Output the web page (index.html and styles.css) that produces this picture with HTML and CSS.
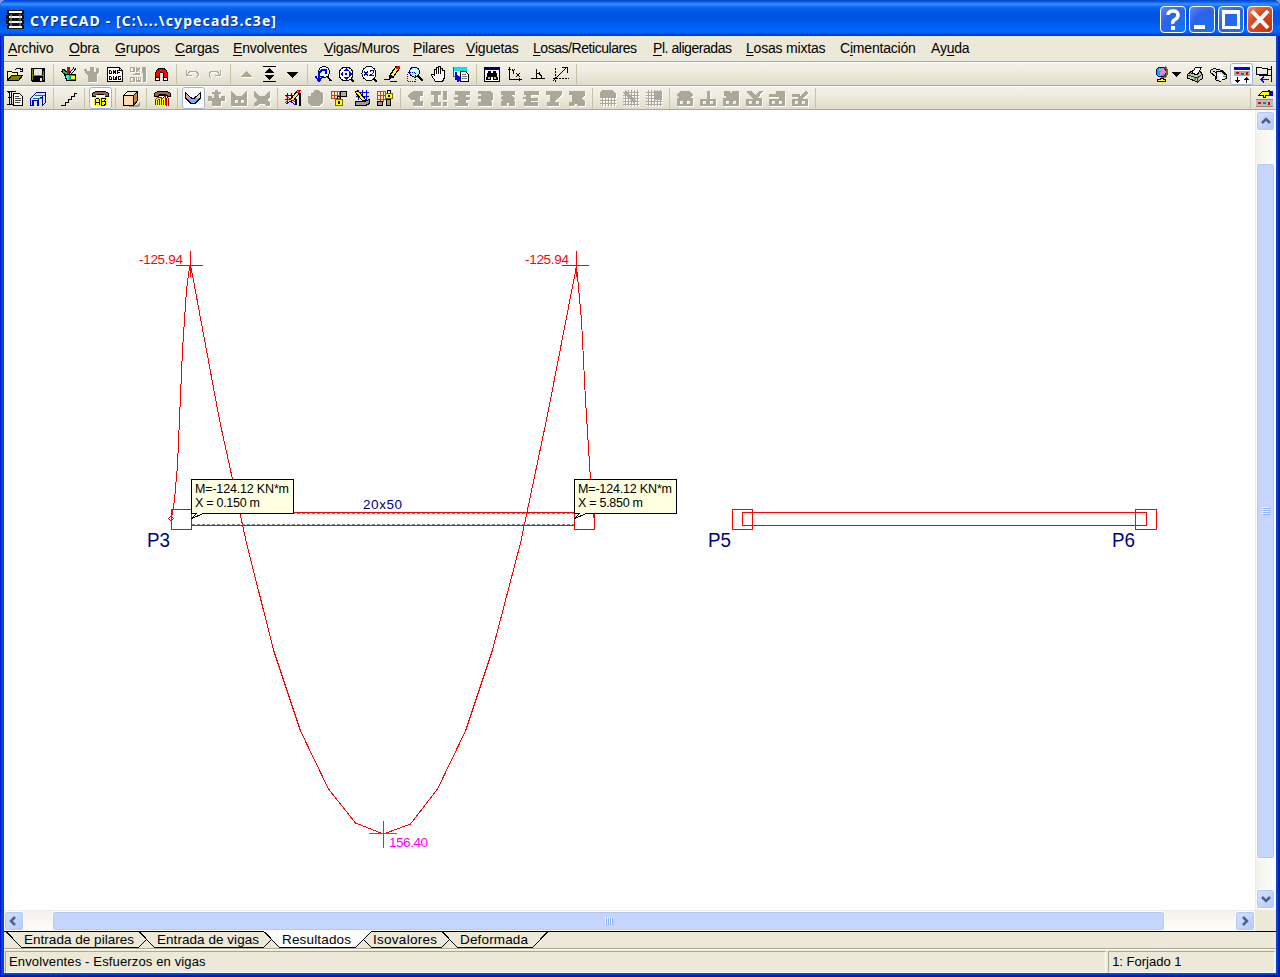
FILE: index.html
```html
<!DOCTYPE html>
<html lang="es">
<head>
<meta charset="utf-8">
<title>CYPECAD</title>
<link rel="stylesheet" href="styles.css">
</head>
<body>
<div class="window">
<header class="titlebar">
  <svg class="logo" viewBox="0 0 19 20"><path d="M1 0h17v4h-1v1h1v4h-1v1h1v4h-1v1h1v4H1v-4h1v-1H0v-4h2V9H0V5h2V4H1z" fill="#111"/><path d="M3 2h13M3 7h13M3 12h13M3 17h13" stroke="#fff" stroke-width="2"/><path d="M5 4v12M14 4v12" stroke="#999"/></svg>
  <h1>CYPECAD - [C:\...\cypecad3.c3e]</h1>
  <div class="controls">
    <button class="ctl"><svg viewBox="0 0 26 27"><path d="M8 9Q8 5 13 5t5 4q0 3-3 4.500t-2 4.500" fill="none" stroke="#fff" stroke-width="3.500"/><path d="M11 20h4v4h-4z" fill="#fff"/></svg></button>
    <button class="ctl"><svg viewBox="0 0 26 27"><path d="M5 19h11v4H5z" fill="#fff"/></svg></button>
    <button class="ctl"><svg viewBox="0 0 26 27"><path d="M4 4h18v19H4zM7 8v12h12V8z" fill="#fff" fill-rule="evenodd"/></svg></button>
    <button class="ctl close"><svg viewBox="0 0 26 27"><path d="M5 5L21 22M21 5L5 22" stroke="#fff" stroke-width="4"/></svg></button>
  </div>
</header>
<div class="client">
<nav class="menu">
  <span><u>A</u>rchivo</span><span><u>O</u>bra</span><span><u>G</u>rupos</span><span><u>C</u>argas</span><span><u>E</u>nvolventes</span><span><u>V</u>igas/Muros</span><span><u>P</u>ilares</span><span><u>V</u>iguetas</span><span class="tight"><u>L</u>osas/Reticulares</span><span class="tight"><u>P</u>l. aligeradas</span><span><u>L</u>osas mixtas</span><span>C<u>i</u>mentación</span><span>Ay<u>u</u>da</span>
</nav>
<div class="toolbar">
  <b><svg viewBox="0 0 17 17"><path d="M.5 14.500v-9h4l1 1h5v3" fill="#ffff80" stroke="#000"/><path d="M.5 14.500l4-5h11l-4 5z" fill="#808000" stroke="#000"/><path d="M8.500 3.500l2-1.500h2l2 2M15.500 2v3h-3" fill="none" stroke="#000"/></svg></b>
  <b><svg viewBox="0 0 17 17"><path d="M1 2h14v14H2v-1H1z" fill="#000"/><path d="M2 3h1v11H2zM13 5h1v9h-1zM3 9h10v1H3z" fill="#808000"/><path d="M4 3h8v6H4zM10 12h2v3h-2z" fill="#e8e6dc"/></svg></b>
  <s></s>
  <b><svg viewBox="0 0 17 17"><path d="M1 4l5 4" stroke="#000" stroke-width="4"/><path d="M2 5l4 3" stroke="#00d050" stroke-width="2"/><path d="M7.500 1v7" stroke="#d00000" stroke-width="3"/><path d="M14 2L9 8" stroke="#000" stroke-width="3"/><path d="M14 2L9 8" stroke="#fff"/><path d="M3 8h12v7H5z" fill="#000"/><path d="M5 9h3v5H6z" fill="#00ffff"/><path d="M8 9h6v5H8z" fill="#00b050"/><path d="M10 10h4v3h-4z" fill="#ff0"/></svg></b>
  <b class="off"><svg viewBox="0 0 17 17"><path d="M0 3h3v2h3V1h4v5h2V2h3v4l-2 2v8H4V9L1 7z"/></svg></b>
  <b><svg viewBox="0 0 17 17"><path d="M.5 1.500h12l3 3v11H.5z" fill="#fff" stroke="#000"/><path d="M12.500 1v3.500H16" fill="none" stroke="#000"/><path d="M2.500 4.500v3h2v-2l-1-1zM6.500 4v1l2 2v1M8.500 4v1l-2 2v1M13 4.500h-2.500V8M11 6.500h2M2.500 10.500v3h2v-2l-1-1zM6.500 10v3h3v-3M8 11v3M14 10.500h-2.500v3h2V12" fill="none" stroke="#000"/></svg></b>
  <b class="off"><svg viewBox="0 0 17 17"><path fill-rule="evenodd" d="M0 1h4l1 1v3L4 6H0zM1 2v3h2V2zM6 1h1l1 2 1-2h1v2L9 4l1 2H9L8 5 7 6H6zM12 1h4v15h-3V7h-1zM3 8l3-1h4v2H2zM0 11h4l1 1v3l-1 1H0zM1 12v3h2v-3zM6 11h1v3h1v-3h1v3h1v-3h1v5H6z"/></svg></b>
  <b><svg viewBox="0 0 17 17"><path d="M2.500 14.500v-8l2-3 2-1h4l2 1 2 3v8h-4v-7l-1-1h-2l-1 1v7z" fill="#f00" stroke="#000"/><path d="M2.500 11.500h4v3h-4zM10.500 11.500h4v3h-4z" fill="#fff" stroke="#000"/></svg></b>
  <s></s>
  <b class="off line"><svg viewBox="0 0 17 17"><path d="M2.500 4v5.500H8M3 9l3-3.500h6l2 2v2L12 12"/></svg></b>
  <b class="off line"><svg viewBox="0 0 17 17"><path d="M13.500 4v5.500H8M13 9l-3-3.500H4l-2 2v2L4 12"/></svg></b>
  <s></s>
  <b class="off"><svg viewBox="0 0 17 17"><path d="M8 5l6 6H2z"/></svg></b>
  <b><svg viewBox="0 0 17 17"><path d="M2 0h13v1H2zM2 15h13v1H2zM8.500 2l5 5h-10zM3.500 9h10l-5 5z"/></svg></b>
  <b><svg viewBox="0 0 17 17"><path d="M2 6h12l-6 6z"/></svg></b>
  <s></s>
  <b><svg viewBox="0 0 17 17"><circle cx="9" cy="6" r="5.500" fill="#d8ffff" stroke="#000"/><path d="M12 10l4 5" stroke="#000" stroke-width="2"/><path d="M4 14V7l3-3h4v4M0 10l4 5 4-5" fill="none" stroke="#0000e0" stroke-width="2"/></svg></b>
  <b><svg viewBox="0 0 17 17"><circle cx="8" cy="8" r="7" fill="#fff" stroke="#000"/><path d="M8 2l3 3H5zM8 14l3-3H5zM2 8l3-3v6zM14 8l-3-3v6zM7 7h2v2H7z" fill="#00f"/><path d="M13 13l3 3" stroke="#000" stroke-width="2"/></svg></b>
  <b><svg viewBox="0 0 17 17"><circle cx="8" cy="7.500" r="7" fill="#fff" stroke="#000"/><path d="M3 5.500l4 4M7 5.500l-4 4M9 6l1-1.500h2l1 1.500-4 3.500h4" fill="none" stroke="#0000c0"/><path d="M13 13l3 3" stroke="#000" stroke-width="2"/></svg></b>
  <b><svg viewBox="0 0 17 17"><path d="M14 1L7 11" stroke="#000" stroke-width="5"/><path d="M14 1L7 11" stroke="#ff0" stroke-width="2.500"/><path d="M15 0l-2 3" stroke="#f00" stroke-width="3"/><path d="M6 9l3 2-4 2zM0 13.500h6M6 15.500h7" stroke="#000"/></svg></b>
  <b><svg viewBox="0 0 17 17"><circle cx="7.500" cy="6" r="5" fill="#aff" stroke="#000"/><path d="M4 5h7" stroke="#fff" stroke-width="2"/><path d="M11 10l5 5" stroke="#000" stroke-width="2.500"/><path d="M.5 6.500h8v9h-8z" fill="none" stroke="#00f" stroke-dasharray="1 1"/></svg></b>
  <b><svg viewBox="0 0 17 17"><path d="M5.500 15.500l-4-6v-1h2l1 1v-6h2v-2h2v-1h2v2h2v2h2v7l-2 4z" fill="#fff" stroke="#000"/><path d="M6.500 3v5M8.500 2v6M10.500 3v5" stroke="#000"/></svg></b>
  <b><svg viewBox="0 0 17 17"><path d="M.5 1.500h13v9H.5z" fill="#fff" stroke="#008080"/><path d="M1 1h13v4H1z" fill="#00e8e8"/><path d="M7.500 5.500h5l3 3v7h-8z" fill="#fff" stroke="#000"/><path d="M9 8.500h4M9 10.500h5M9 12.500h5" stroke="#777"/><path d="M3 6v7h4M4 10l3 3-3 3" fill="none" stroke="#00f" stroke-width="2"/></svg></b>
  <s></s>
  <b><svg viewBox="0 0 17 17"><path d="M.5 1.500h15v14H.5z" fill="#fff" stroke="#000"/><path d="M1 1h15v3H1z" fill="#000080"/><path d="M4 5h3v2h2V5h3l2 8v1H9v-3H7v3H2v-1z"/><path d="M4 11h2v2H4zM10 11h2v2h-2z" fill="#bbb"/></svg></b>
  <b class="black"><svg viewBox="0 0 17 17"><path d="M2.500 1v12.500H15M1 3.500h3M12.500 12v3M5 3l1.500 2L8 3M6.500 5v3M9 7l4 4M13 7l-4 4"/></svg></b>
  <b class="black"><svg viewBox="0 0 17 17"><path d="M1 12.500h14M6.500 3v9M7 7.500h2l2 2V13M9.500 6v2"/></svg></b>
  <b class="black"><svg viewBox="0 0 17 17"><path d="M0 15L14 1M9 1.500h5v5"/><path d="M2.500 2v14M0 12.500h16" stroke-dasharray="2 1"/></svg></b>
  <s></s>
  <div class="right">
    <b class="globe"><svg viewBox="0 0 17 17"><path d="M11 1q5 5 0 10l-4 1" fill="none" stroke="#806000" stroke-width="2"/><circle cx="7" cy="6" r="5" fill="#00b8b0" stroke="#008"/><path d="M5 3l3 2-2 5M8 2l3 4-3 2" stroke="#f080e0" stroke-width="2" fill="none"/><path d="M6.500 12.500h3v1h2v2h-8v-2h3z" fill="#ff0" stroke="#000"/></svg></b>
    <b class="drop"><svg viewBox="0 0 9 17"><path d="M0 6h9l-4.500 5z"/></svg></b>
    <b><svg viewBox="0 0 17 17"><path d="M.5 8.500l5-4h7l3 4v4l-5 3.500-10-4z" fill="#c0c0b8" stroke="#000"/><path d="M4.500 7.500l4-6h6l-4 7z" fill="#fff" stroke="#000"/><path d="M1 9l9 3 5-3.500M10.500 12v4" fill="none" stroke="#333"/><path d="M7 12.500h2" stroke="#0c0" stroke-width="2"/></svg></b>
    <b><svg viewBox="0 0 17 17"><path d="M.5 4.500l3-2 9 2 3.500 4v4l-2 1.500-2-1-2 2.500-5-2V10l-4-3z" fill="#ddd" stroke="#000"/><path d="M3.500 5l3 2v6M6.500 6l5-1 4 4" fill="none" stroke="#000"/><path d="M8 8h4l2 3-4 4z" fill="#fff"/><path d="M13 10.500h3" stroke="#0b0"/></svg></b>
    <b class="on"><svg viewBox="0 0 17 17"><path d="M1 1h16v3H1z" fill="#00f"/><path d="M1 5h16v5H1z" fill="#aaa"/><path d="M3 7h3M14 6v3" stroke="#e00" stroke-width="2"/><path d="M8 8h3" stroke="#08a" stroke-width="2"/><path d="M4 11h1v3h2l-2.500 3L2 14h2zM13 17v-3h-2l2.500-3 2.500 3h-2v3z"/></svg></b>
    <b><svg viewBox="0 0 17 17"><path d="M.5 1.500h5l1 1h5v6H.5zM12 3.500h3.500v6H3M15.500 0v16" fill="none" stroke="#000"/><path d="M5 13.500h8M8 10.500l-3 3 3 3" fill="none" stroke="#00f"/></svg></b>
  </div>
</div>
<div class="toolbar">
  <b><svg viewBox="0 0 17 17"><path d="M2.500 1v14M4.500 1v14M0 1.500h9M0 14.500h6M1 1v2M1 7.500h4" stroke="#000"/><path d="M6.500 3.500h6l3 3v9h-9z" fill="#fff" stroke="#000"/><path d="M8 6.500h4M8 8.500h6M8 10.500h6M8 12.500h5" stroke="#444"/></svg></b>
  <b><svg viewBox="0 0 17 17"><path d="M.5 8.500l6-6h9v10l-3 3V6.500l-4 3v6H7v-5H3.500v5h-3z" fill="#d0f0ff" stroke="#0000a8"/><path d="M3 8.500h9M5 5.500h10" stroke="#0080a0"/><path d="M2.500 10v5" stroke="#0000a8"/></svg></b>
  <s></s>
  <b class="black"><svg viewBox="0 0 17 17"><path d="M0 15.500h4.500v-3h3v-3h3v-3h3v-3H16"/></svg></b>
  <s></s>
  <b class="on"><svg viewBox="0 0 17 17"><path d="M.5 3.500l3-2h10l3 2v3h-3l-2-2h-6l-2 2h-3z" fill="#a06040" stroke="#000"/><path d="M4 5h9v3H4z" fill="#fff"/><path d="M2 7h13v9H2z" fill="#ff0"/><path d="M3.500 15V9.500l1-1h2l1 1V15M3.500 12.500h4M9.500 8v7h3l1-1v-2l-1-.5h-3M12 11l1-1V8.500H9.500" fill="none" stroke="#000"/></svg></b>
  <s></s>
  <b><svg viewBox="0 0 17 17"><path d="M5 15h10l2-4v4l-2 2H6z" fill="#999"/><path d="M.5 5.500l4-4h10v9l-4 5H.5z" fill="#c88040" stroke="#000"/><path d="M.5 5.500h10v10H.5z" fill="#ffd8b0" stroke="#000"/><path d="M1 5l4-3h9l-4 3z" fill="#ffe8d0"/><path d="M10.500 5.500l4-4" stroke="#000"/></svg></b>
  <s></s>
  <b><svg viewBox="0 0 17 17"><path d="M.5 3.500l3-2h10l3 2v3h-3l-2-2h-6l-2 2h-3z" fill="#a06040" stroke="#000"/><path d="M4 5h9v3H4z" fill="#fff" stroke="#000"/><path d="M2.500 15v-5l2-2h2v7M8.500 15v-5l2-2v7M13.500 8v8" fill="none" stroke="#b00000" stroke-width="3"/><path d="M2.500 15v-5l2-2h2v7M8.500 15v-5l2-2v7M13.500 8v8" fill="none" stroke="#ff0"/></svg></b>
  <s></s>
  <b class="on"><svg viewBox="0 0 17 17"><path d="M1 3l6 5H1z" fill="#ff9a80"/><path d="M16 3l-6 5h6z" fill="#ffe080"/><path d="M1 8h15l-5 5H6z" fill="#78a8ff"/><path d="M.5 3l6 5h3l6-5v5l-5 5h-5l-5-5z" fill="none" stroke="#000"/></svg></b>
  <b class="off"><svg viewBox="0 0 17 17"><path d="M0 6h4v2h2V4H4V2h3V0h3v2h3v2h-2v4h2V6h4v5h-4v5H4v-5H0z"/></svg></b>
  <b class="off"><svg viewBox="0 0 17 17"><path fill-rule="evenodd" d="M0 1l6 5h4l6-5v15H0zM4 10v3h3v-3zM10 10v3h3v-3z"/></svg></b>
  <b class="off"><svg viewBox="0 0 17 17"><path d="M0 1l6 5h4l6-5v6l-3 3 3 3v3h-3l-3-2H6l-3 2H0v-3l3-3-3-3z"/></svg></b>
  <s></s>
  <b><svg viewBox="0 0 17 17"><path d="M0 5.500h8M0 9.500h8M2.500 3v10M6.500 3v10M1 14l5-3 4 4" fill="none" stroke="#00f"/><path d="M0 13l5-5 5 4M1 6l5 3" fill="none" stroke="#f00"/><path d="M12 4h3v12M11 9v6" fill="none" stroke="#000" stroke-width="2"/><path d="M14 1L7 10" stroke="#000" stroke-width="4"/><path d="M14 1L7 10" stroke="#ff0" stroke-width="2"/><path d="M15 0l-2 3" stroke="#f00" stroke-width="2"/></svg></b>
  <b class="off"><svg viewBox="0 0 17 17"><path d="M3 3l3-1V0h5v1l4 2v9l-3 4H3L0 13V6h3z"/></svg></b>
  <b><svg viewBox="0 0 17 17"><path d="M.5 1.500h8v7h-8zM0 5.500h9M3.500 1v8M6.500 1v8" fill="none" stroke="#d04000"/><path d="M9.500 1.500h6v5h-6z" fill="#aaa" stroke="#000"/><path d="M6.500 9V6.500h3V9" fill="none" stroke="#000"/><path d="M4.500 9.500h7v6h-7z" fill="#ff0" stroke="#806000"/><path d="M7 11h2v3H7z"/></svg></b>
  <b><svg viewBox="0 0 17 17"><path d="M4.500 0v10M8.500 0v11M12.500 0v11M2 2.500h13M2 6.500h13" stroke="#00f"/><path d="M1.500 11.500h9l5-2v4l-4 2h-10z" fill="#999" stroke="#000"/><path d="M2 1l9 10" stroke="#000" stroke-width="4"/><path d="M3 2l7 8" stroke="#ff0" stroke-width="2"/></svg></b>
  <b><svg viewBox="0 0 17 17"><path d="M.5 1.500h8v8h-8zM0 5.500h9M3.500 1v11M6.500 1v11" fill="none" stroke="#d04000"/><path d="M.5 11.500h5v4h-5zM9.500 9.500h4v6h-4z" fill="#999" stroke="#000"/><path d="M10.500 4V.500h3V4" fill="none" stroke="#000"/><path d="M8.500 3.500h7v5h-7z" fill="#ff0" stroke="#806000"/><path d="M11 5h2v2h-2z"/></svg></b>
  <s></s>
  <b class="off"><svg viewBox="0 0 17 17"><path d="M1 4l5-3h9v5h-3v5h3v5H5v-4h2v-2H3L0 7z"/></svg></b>
  <b class="off"><svg viewBox="0 0 17 17"><path d="M0 1h10v4H7v7h3v4H0v-4h3V5H0zM12 1h4v9h-4zM12 12h4v4h-4z"/></svg></b>
  <b class="off"><svg viewBox="0 0 17 17"><path d="M1 1h15v4h-4v2h4v3h-4v3h2v3H1v-3h3v-3H0V7h4V5H1z"/></svg></b>
  <b class="off"><svg viewBox="0 0 17 17"><path d="M1 1h12l3 3v6l-3 2h2v4H1v-4h3V9H1V6h3V4H1z"/></svg></b>
  <b class="off"><svg viewBox="0 0 17 17"><path d="M1 1h14v4h-3l3 4-2 2h2v5H9v-3H7v3H1v-5h2L0 8l4-3H1z"/></svg></b>
  <b class="off"><svg viewBox="0 0 17 17"><path d="M1 1h15v4H8v3h7v3H8v1h7v4H1v-4h2V9H0V7h3V5H1z"/></svg></b>
  <b class="off"><svg viewBox="0 0 17 17"><path d="M0 1h16v3l-7 7v1h4v4H1v-4h3V5H0z"/></svg></b>
  <b class="off"><svg viewBox="0 0 17 17"><path d="M0 1h16v4l-3 4 3 3v4H9l-2-3-2 3H0v-4h3V5H0z"/></svg></b>
  <s></s>
  <b class="off"><svg viewBox="0 0 17 17"><path d="M0 2l3-2h9l4 3v5H0zM2 8h1v8H2zM5 8h1v8H5zM8 8h1v8H8zM11 8h1v8h-1zM14 8h1v8h-1zM0 10h16v1H0zM0 13h16v1H0z"/></svg></b>
  <b class="off line"><svg viewBox="0 0 17 17"><path d="M2.500 0v16M5.500 0v16M8.500 0v16M11.500 0v16M14.500 0v16M0 2.500h16M0 5.500h16M0 8.500h16M0 11.500h16M0 14.500h16"/><path d="M2 2l10 10" stroke-width="3"/></svg></b>
  <b class="off line"><svg viewBox="0 0 17 17"><path d="M2.500 0v16M5.500 0v16M8.500 0v16M11.500 0v16M14.500 0v16M0 2.500h16M0 5.500h16M0 8.500h16M0 11.500h16M0 14.500h16"/><path d="M12 1v9" stroke-width="7"/></svg></b>
  <s></s>
  <b class="off"><svg viewBox="0 0 17 17"><path fill-rule="evenodd" d="M1 3l3-2h9l3 4-2 3h2v8H0V8h2L0 6zM3 11v3h3v-3zM10 11v3h3v-3z"/></svg></b>
  <b class="off"><svg viewBox="0 0 17 17"><path fill-rule="evenodd" d="M7 1h3v8h6v7H0V9h7zM3 11v3h3v-3zM10 11v3h3v-3z"/></svg></b>
  <b class="off"><svg viewBox="0 0 17 17"><path fill-rule="evenodd" d="M1 1h5l3 3V1h7v15H0V8h3V6H1zM3 11v3h3v-3zM10 11v3h3v-3z"/></svg></b>
  <b class="off"><svg viewBox="0 0 17 17"><path fill-rule="evenodd" d="M1 1h4l4 4 4-4h4l-5 7h4v8H0V9h7L1 3zM3 11v3h3v-3zM10 11v3h3v-3z"/></svg></b>
  <b class="off"><svg viewBox="0 0 17 17"><path fill-rule="evenodd" d="M0 4h7V1h9v15H0V9h10V7H0zM3 11v3h3v-3zM10 11v3h3v-3z"/></svg></b>
  <b class="off"><svg viewBox="0 0 17 17"><path fill-rule="evenodd" d="M0 4h8v2l6-5 2 2-6 6h6v7H0V9h6V7H0zM3 11v3h3v-3zM10 11v3h3v-3z"/></svg></b>
  <s></s>
  <div class="right"><s></s>
    <b><svg viewBox="0 0 17 17"><path d="M2.500 5.500l4-4h5l2-1v5h-4v2h-2v-2z" fill="#ff0" stroke="#000"/><path d="M13 1h4v5h-4z" fill="#00c"/><path d="M0 10h17v6H0z" fill="#bbb"/><path d="M0 9.500h17M0 16.500h17" stroke="#888"/><path d="M2 13h3M13 12v3" stroke="#e00" stroke-width="2"/><path d="M7 13h3" stroke="#08a" stroke-width="2"/></svg></b>
  </div>
</div>
<main class="work">
<svg class="drawing" viewBox="4 110 1251 800">
  <g class="pen">
    <path d="M171.500 518L174.500 500 177.500 465 182.500 350 186.500 290 189.500 267 190.500 266 191.500 270 219.500 420 246.500 543 273.500 650 300.500 731 328.500 789 355.500 823 383.500 834 410.500 824 437.500 789 465.500 731 492.500 650 520.500 543 547.500 415 576.500 266 581.500 320 585.500 400 590.500 480 593.500 518"/>
    <path d="M190.500 251v26M176 265.500h27M576.500 251v26M562 265.500h27"/>
    <path d="M171.500 509.500h20v20h-20zM574.500 509.500h20v20h-20zM191 512.500h384M191 525.500h384M732.500 509.500h20v20h-20zM1135.500 509.500h21v20h-21zM742.500 512.500h404v13h-404z"/>
    <path d="M170.500 516.500h1l2 2-2 2h-1l-2-2z"/>
    <path class="dash" d="M192 513.500h382M192 524.500h382"/>
    <path class="magenta" d="M369 833.500h28"/><path class="olive" d="M383.500 821v27"/>
  </g>
  <g class="tip">
    <path d="M191.500 479.500h102v34h-90l-12 5 5-5h-5z"/><path d="M574.500 479.500h102v34h-90l-12 5 5-5h-5z"/>
  </g>
  <g class="label">
    <text x="195" y="493" textLength="94">M=-124.12 KN*m</text><text x="195" y="507" textLength="65">X = 0.150 m</text>
    <text x="578" y="493" textLength="94">M=-124.12 KN*m</text><text x="578" y="507" textLength="65">X = 5.850 m</text>
  </g>
  <g class="value">
    <text class="red" x="139" y="264" textLength="44">-125.94</text><text class="red" x="525" y="264" textLength="44">-125.94</text>
    <text class="pink" x="389" y="847" textLength="39">156.40</text><text class="navy" x="363" y="509" textLength="39">20x50</text>
  </g>
  <g class="pillar">
    <text x="147" y="547" textLength="23" lengthAdjust="spacingAndGlyphs">P3</text><text x="708" y="547" textLength="23" lengthAdjust="spacingAndGlyphs">P5</text><text x="1112" y="547" textLength="23" lengthAdjust="spacingAndGlyphs">P6</text>
  </g>
</svg>
<div class="vscroll">
  <i class="sb"><svg viewBox="0 0 18 20"><path d="M5 12l4-4 4 4"/></svg></i>
  <i class="thumb"><svg viewBox="0 0 8 8"><path d="M0 .5h7M0 2.500h7M0 4.500h7M0 6.500h7"/></svg></i>
  <i class="sb"><svg viewBox="0 0 18 20"><path d="M5 8l4 4 4-4"/></svg></i>
</div>
<div class="hscroll">
  <i class="sb"><svg viewBox="0 0 20 18"><path d="M11 5L7 9l4 4"/></svg></i>
  <i class="thumb"><svg viewBox="0 0 8 8"><path d="M.5 0v7M2.500 0v7M4.500 0v7M6.500 0v7"/></svg></i>
  <i class="sb"><svg viewBox="0 0 20 18"><path d="M8 5l4 4-4 4"/></svg></i>
</div>
</main>
<svg class="tabs" viewBox="4 931 1272 17">
  <path class="selected" d="M264 931h107l-16 16h-76z"/>
  <path class="edge" d="M4 931.500h260M371 931.500h905M6.500 932l15 15.500h117l8-8M139.500 932l15 15.500h109l8-8M264.500 932l15 15.500h76l16-16M363.500 939.500l8 8h70l8-8M442.500 932l15 15.500h75l15-15.500"/>
  <text x="24" y="944" textLength="110">Entrada de pilares</text><text x="157" y="944" textLength="102">Entrada de vigas</text><text x="282" y="944" textLength="69">Resultados</text><text x="373" y="944" textLength="64">Isovalores</text><text x="460" y="944" textLength="68">Deformada</text>
</svg>
<footer class="status"><span class="mode">Envolventes - Esfuerzos en vigas</span><span class="floor">1: Forjado 1</span></footer>
</div>
</div>
</body>
</html>
```
FILE: styles.css
```css
* { box-sizing: border-box; }
body { margin: 0; overflow: hidden; background: #7a97df; font-family: "Liberation Sans", Arial, sans-serif; color: #000; }
svg { display: block; flex: none; }
.window { width: 1280px; height: 977px; display: flex; flex-direction: column; border-radius: 7px 7px 0 0; overflow: hidden; background: #0042dd; box-shadow: inset 1px 0 #0019cf, inset -2px 0 #001fa0, inset 0 -2px #001a9c; }
.titlebar { height: 36px; display: flex; align-items: center; padding: 3px 7px 0 6px; background: linear-gradient(#0046c8 0, #0a5ff0 2px, #3b91ff 4px, #0869f4 7px, #0054e3 12px, #0055e5 20px, #0064fa 28px, #0068ff 32px, #003fcf 35px, #0040d8 36px); }
.logo { width: 19px; height: 20px; }
.titlebar h1 { margin: 2px 0 0 5px; font: bold 14px/18px "Noto Sans", sans-serif; color: #fff; letter-spacing: 1.1px; text-shadow: 1px 1px #062a85; white-space: pre; }
.controls { display: flex; gap: 3px; margin-left: auto; }
.ctl { width: 26px; height: 27px; padding: 0; border: 1px solid #fff; border-radius: 4px; background: radial-gradient(circle at 85% 85%, #1274f8, #2c62e8 60%, #5e8df5); }
.ctl svg { width: 26px; height: 27px; margin: -1px; }
.close { background: radial-gradient(circle at 85% 85%, #c63208, #dd4a22 60%, #ea8a70); }
.client { height: 937px; margin: 0 4px; display: flex; flex-direction: column; background: #ece9d8; }
.menu { height: 26px; display: grid; grid-template-columns: 45px 30px 44px 42px 75px 73px 37px 51px 104px 77px 78px 75px 39px; gap: 16px; padding: 0 4px; border-bottom: 1px solid #aca899; font-size: 14px; line-height: 25px; letter-spacing: -.2px; white-space: nowrap; }
.menu u { text-underline-offset: 2px; text-decoration-thickness: 1px; }
.menu .tight { letter-spacing: -.45px; }
.toolbar { height: 24px; display: flex; align-items: stretch; border-top: 1px solid #fff; border-bottom: 1px solid #aca899; background: linear-gradient(#f4f2e8, #ebe8d9 60%, #dfdccb); overflow: hidden; }
.toolbar b { width: 23px; height: 22px; flex: none; display: flex; align-items: center; justify-content: center; }
.toolbar b svg { width: 17px; height: 17px; shape-rendering: crispEdges; }
.toolbar s { width: 8px; flex: none; background: linear-gradient(#c5c2a8, #c5c2a8) 3px 1px / 1px 20px no-repeat; }
.toolbar .on { border: 1px solid #9fb6cf; border-radius: 3px; background: #fff; }
.off path { fill: #aca899; }
.off svg { filter: drop-shadow(1px 1px 0 #fff); }
.line path { fill: none; stroke: #aca899; }
.black path { fill: none; stroke: #000; }
.right { display: flex; margin-left: auto; }
.toolbar .right s { background-position-x: 5px; }
.right .globe { width: 17px; }
.right .drop { width: 10px; margin-right: 3px; }
.toolbar .drop svg { width: 9px; }
.work { flex: none; height: 821px; display: grid; grid-template: 800px 21px / 1251px 21px; }
.drawing { width: 1251px; height: 800px; background: #fff; }
.pen { fill: none; stroke: #f00; shape-rendering: crispEdges; }
.pen .dash { stroke: #808080; stroke-dasharray: 3 2; }
.pen .magenta { stroke: #f0f; }
.pen .olive { stroke: #408000; }
.tip { fill: #ffffe1; stroke: #000; shape-rendering: crispEdges; }
.label { font-size: 12.500px; }
.value { font-size: 13.500px; }
.red { fill: #f00; }
.pink { fill: #f0f; }
.navy, .pillar { fill: #000080; }
.pillar { font-size: 20px; }
.vscroll, .hscroll { display: flex; }
.vscroll { flex-direction: column; padding: 1px 1px 0 0; border-left: 1px solid #eeede5; background: linear-gradient(90deg, #f3f1ec, #fefefb); }
.hscroll { border-top: 1px solid #eeede5; background: linear-gradient(#f3f1ec, #fefefb); }
.sb, .thumb { display: flex; align-items: center; justify-content: center; border: 1px solid #fff; border-radius: 3px; box-shadow: inset 0 0 0 1px #b4c8f6; background: linear-gradient(135deg, #d5e2ff, #b5caf9); }
.sb path { fill: none; stroke: #4d6185; stroke-width: 2.500; }
.thumb { background: #c6d5fd; }
.thumb svg { width: 8px; height: 8px; }
.thumb path { stroke: #eef4ff; filter: drop-shadow(1px 1px 0 #8cb0f8); }
.vscroll .sb, .vscroll .thumb { width: 19px; }
.vscroll .sb { height: 20px; }
.vscroll .sb svg { width: 18px; height: 20px; }
.vscroll .thumb { height: 696px; margin: 32px 0 30px; }
.hscroll .sb, .hscroll .thumb { height: 20px; }
.hscroll .sb { width: 20px; }
.hscroll .sb svg { width: 20px; height: 18px; }
.hscroll .thumb { width: 1113px; margin: 0 70px 0 28px; }
.tabs { width: 1272px; height: 17px; font-size: 13.500px; }
.selected { fill: #fff; }
.edge { fill: none; stroke: #000; shape-rendering: crispEdges; }
.status { height: 25px; display: flex; gap: 2px; padding: 2px 1px 1px; border-top: 1px solid #aca899; box-shadow: inset 0 1px #fff; font-size: 13px; line-height: 20px; }
.status span { height: 22px; border: 1px solid; border-color: #aca899 #fff #fff #aca899; padding-left: 3px; white-space: pre; }
.mode { width: 1102px; letter-spacing: .14px; }
.floor { width: 167px; }
```
